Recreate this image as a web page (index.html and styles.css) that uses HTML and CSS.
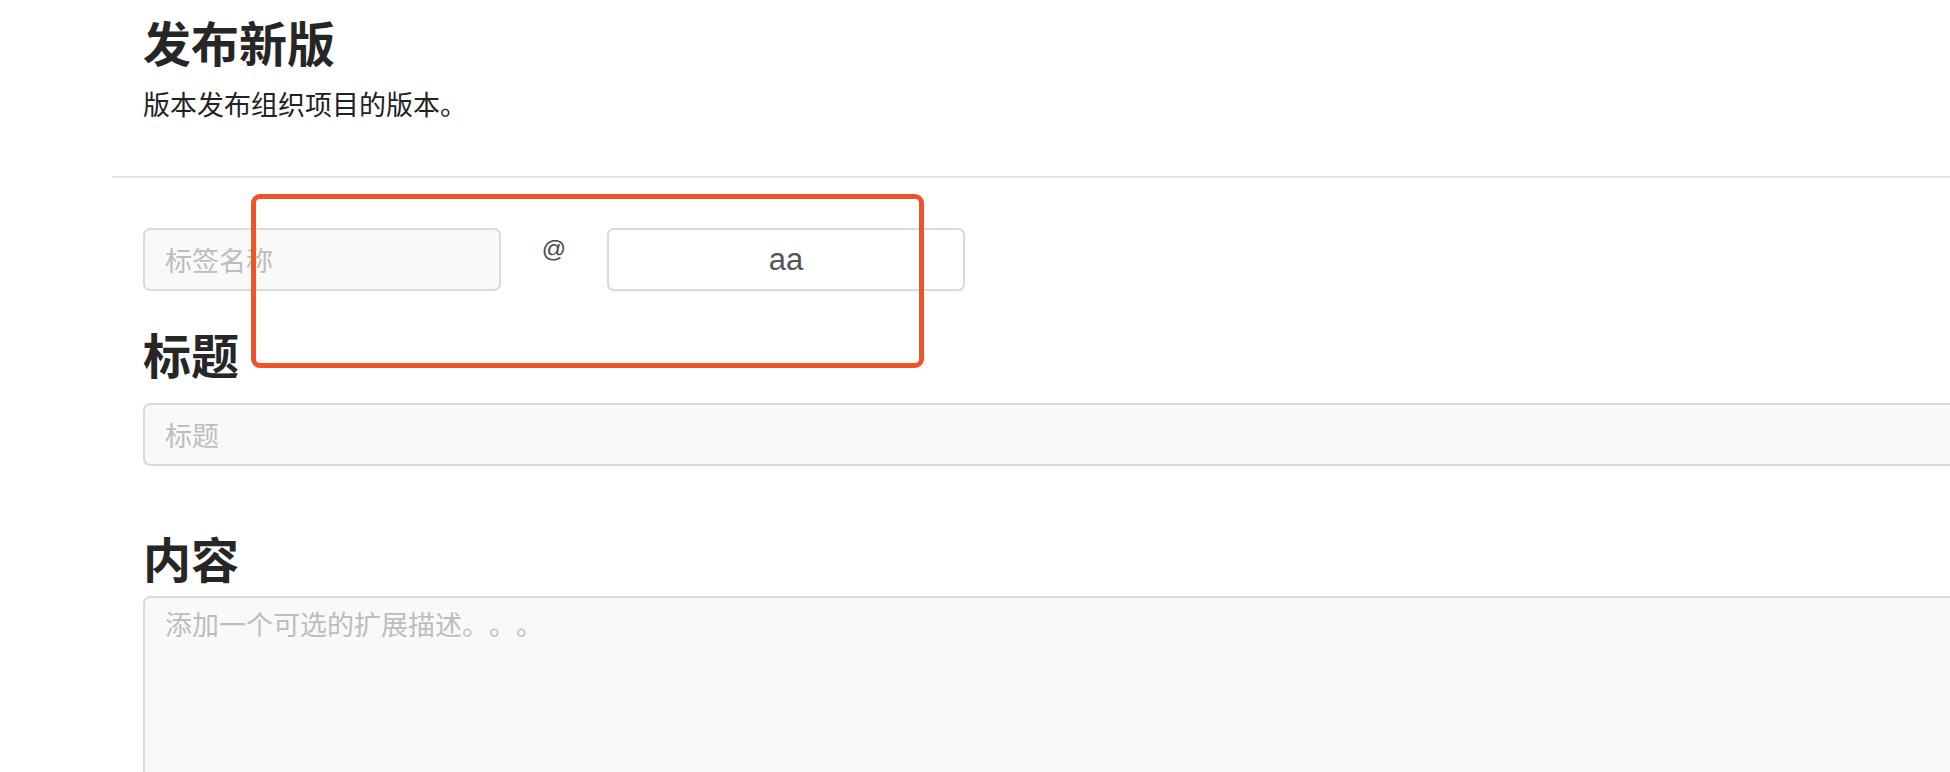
FILE: index.html
```html
<!DOCTYPE html>
<html lang="zh-CN">
<head>
<meta charset="utf-8">
<title>发布新版</title>
<link rel="stylesheet" href="styles.css">
</head>
<body>
<div class="page">
  <header class="head">
    <h1 class="title">发布新版</h1>
    <p class="sub">版本发布组织项目的版本。</p>
  </header>
  <hr class="sep">
  <form class="form">
    <div class="tag-row">
      <input class="field tag" type="text" placeholder="标签名称">
      <span class="at">@</span>
      <input class="field target" type="text" value="aa">
      <div class="mark"></div>
    </div>
    <h2 class="label label-title">标题</h2>
    <input class="field wide" type="text" placeholder="标题">
    <h2 class="label label-body">内容</h2>
    <textarea class="field area" placeholder="添加一个可选的扩展描述。。。"></textarea>
  </form>
</div>
</body>
</html>
```

FILE: styles.css
```css
html, body {
  margin: 0;
  padding: 0;
  background: #ffffff;
}
body {
  overflow: hidden;
  font-family: "Noto Sans CJK SC", "Noto Sans", sans-serif;
  color: #262626;
  text-spacing-trim: space-all;
}
.page {
  padding-left: 112px;
}
.head {
  padding-left: 31px;
}
.title {
  margin: 13px 0 0;
  font-size: 48px;
  line-height: 1.2;
  font-weight: 700;
  color: #262626;
}
.sub {
  margin: 13px 0 0;
  font-size: 27px;
  line-height: 1.5;
  color: #222222;
}
.sep {
  margin: 52px 0 0;
  border: 0;
  height: 2px;
  background: #e5e5e5;
}
.form {
  padding-left: 31px;
  margin-top: 50px;
}
.tag-row {
  position: relative;
  display: flex;
  align-items: flex-start;
}
.field {
  box-sizing: border-box;
  border: 2px solid #dadada;
  border-radius: 7px;
  background: #f9f9f9;
  font-family: "Noto Sans CJK SC", "Noto Sans", sans-serif;
  font-size: 27px;
  color: #555555;
  padding: 0 20px;
  outline: none;
  display: block;
  margin: 0;
  text-spacing-trim: space-all;
}
.field::placeholder {
  color: #bdbdbd;
  text-spacing-trim: space-all;
}
.tag {
  width: 358px;
  height: 63px;
}
.at {
  width: 106px;
  text-align: center;
  font-family: "Liberation Sans", Arial, sans-serif;
  font-size: 24px;
  line-height: 1;
  padding-top: 9px;
  color: #4a4a4a;
}
.target {
  width: 358px;
  height: 63px;
  background: #ffffff;
  text-align: center;
  font-family: "Liberation Sans", Arial, sans-serif;
  font-size: 31px;
  box-shadow: 0 2px 2px rgba(0, 0, 0, 0.03);
}
.mark {
  position: absolute;
  left: 108px;
  top: -34px;
  width: 673px;
  height: 174px;
  box-sizing: border-box;
  border: 5px solid #f0532a;
  border-radius: 9px;
  pointer-events: none;
}
.label {
  margin: 0;
  font-size: 48px;
  line-height: 1.2;
  font-weight: 700;
  color: #262626;
}
.label-title {
  margin-top: 34px;
  margin-bottom: 20px;
}
.wide {
  width: 1900px;
  height: 63px;
}
.label-body {
  margin-top: 63px;
  margin-bottom: 10px;
}
.area {
  width: 1900px;
  height: 300px;
  padding: 6px 20px;
  line-height: 1.5;
  resize: none;
}
```
